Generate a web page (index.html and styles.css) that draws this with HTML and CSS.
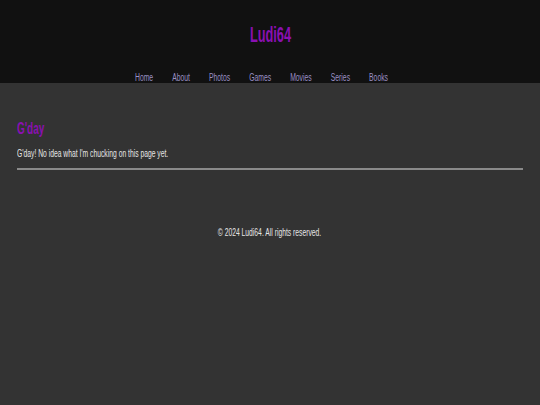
FILE: index.html
```html
<!DOCTYPE html>
<html lang="en">
<head>
<meta charset="utf-8">
<title>Ludi64</title>
<link rel="stylesheet" href="styles.css">
</head>
<body>
<header class="site-header">
  <h1 class="site-title"><span class="narrow">Ludi64</span></h1>
  <nav class="site-nav">
    <a href="#">Home</a>
    <a href="#">About</a>
    <a href="#">Photos</a>
    <a href="#">Games</a>
    <a href="#">Movies</a>
    <a href="#">Series</a>
    <a href="#">Books</a>
  </nav>
</header>
<main class="content">
  <h2 class="page-title"><span class="narrow narrow-left">G'day</span></h2>
  <p class="page-text"><span class="narrow narrow-left">G'day! No idea what I'm chucking on this page yet.</span></p>
  <hr class="divider">
</main>
<footer class="site-footer"><span class="narrow">© 2024 Ludi64. All rights reserved.</span></footer>
</body>
</html>
```
FILE: styles.css
```css
html, body {
  margin: 0;
  padding: 0;
}
body {
  background: #333333;
  color: #e6e6e6;
  font-family: "Liberation Sans", Arial, sans-serif;
  font-size: 10px;
  min-height: 405px;
}
.narrow {
  display: inline-block;
  transform: scaleX(0.675);
  transform-origin: center;
  white-space: nowrap;
}
.narrow-left {
  transform-origin: left center;
}
.site-header {
  background: #111111;
  padding-top: 23px;
  text-align: center;
}
.site-title {
  margin: 0;
  font-size: 22px;
  line-height: 24px;
  font-weight: bold;
  color: #8a10b2;
}
.site-title .narrow {
  transform: scaleX(0.58);
}
.site-nav {
  margin-top: 25px;
  padding-right: 25px;
  display: flex;
  justify-content: center;
  gap: 28px;
  font-size: 10px;
  line-height: 11px;
  transform: scaleX(0.68);
  transform-origin: 270px center;
}
.site-nav a {
  color: #9a90c4;
  text-decoration: none;
}
.content {
  padding: 37px 17px 0;
}
.page-title {
  margin: 0;
  font-size: 16px;
  line-height: 18px;
  font-weight: bold;
  color: #8a10b2;
}
.page-title .narrow {
  transform: scaleX(0.62);
}
.page-text {
  margin: 10px 0 0;
  line-height: 11px;
  color: #e6e6e6;
}
.divider {
  margin: 9px 0 0;
  border: 0;
  height: 2px;
  background: #8a8a8a;
}
.site-footer {
  margin-top: 57px;
  text-align: center;
  line-height: 11px;
  color: #e6e6e6;
}
```
